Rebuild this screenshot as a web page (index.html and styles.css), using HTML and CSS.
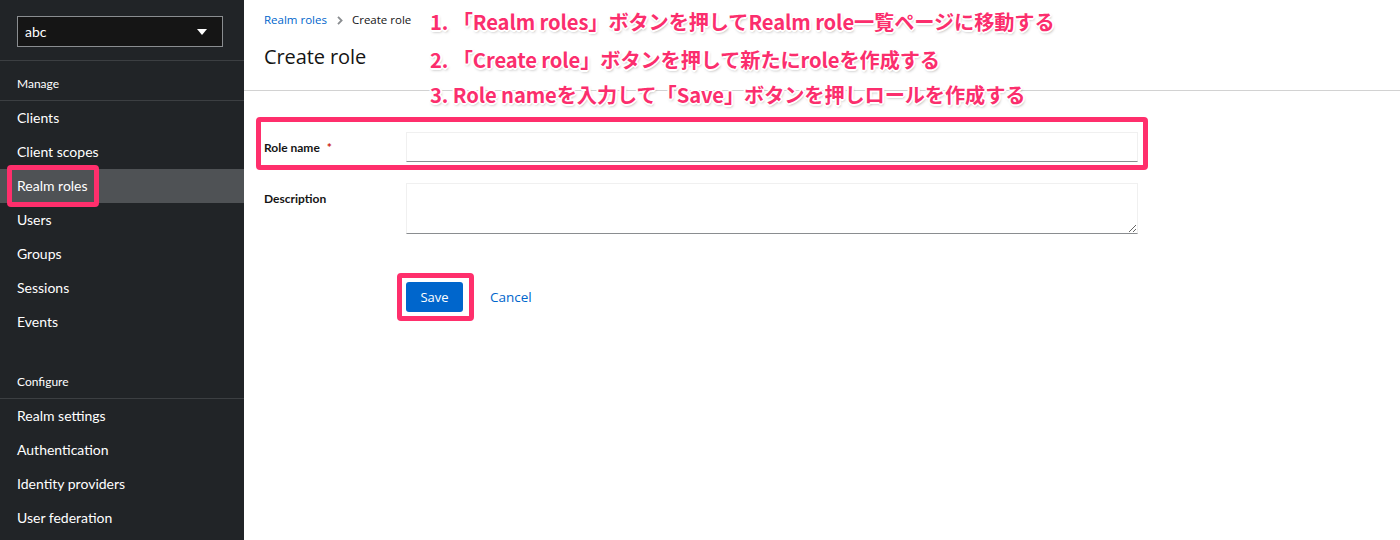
FILE: index.html
```html
<!DOCTYPE html>
<html lang="ja">
<head>
<meta charset="utf-8">
<title>Create role</title>
<link rel="stylesheet" href="styles.css">
</head>
<body>
<div class="app">
  <aside class="sidebar">
    <div class="realm-select-wrap">
      <div class="realm-select">
        <span>abc</span>
        <svg class="caret" width="10" height="6" viewBox="0 0 10 6"><path d="M0 0h10L5 6z" fill="#fff"/></svg>
      </div>
    </div>
    <div class="nav-group">
      <div class="nav-title">Manage</div>
      <ul class="nav-list">
        <li>Clients</li>
        <li>Client scopes</li>
        <li class="active">Realm roles</li>
        <li>Users</li>
        <li>Groups</li>
        <li>Sessions</li>
        <li>Events</li>
      </ul>
    </div>
    <div class="nav-group second">
      <div class="nav-title">Configure</div>
      <ul class="nav-list">
        <li>Realm settings</li>
        <li>Authentication</li>
        <li>Identity providers</li>
        <li>User federation</li>
      </ul>
    </div>
    <div class="mark mark-nav"></div>
  </aside>
  <main class="main">
    <section class="page-header">
      <nav class="breadcrumb">
        <a class="crumb-link">Realm roles</a>
        <svg class="crumb-sep" width="6" height="9" viewBox="0 0 6 9"><path d="M1 0.8L4.6 4.5L1 8.2" fill="none" stroke="#8a8d90" stroke-width="1.8"/></svg>
        <span class="crumb-current">Create role</span>
      </nav>
      <h1 class="title">Create role</h1>
    </section>
    <section class="form-section">
      <form class="form">
        <div class="form-row">
          <label class="form-label">Role name <span class="req">*</span></label>
          <div class="form-control"><input class="text-input" type="text"></div>
        </div>
        <div class="form-row">
          <label class="form-label top">Description</label>
          <div class="form-control"><textarea class="text-area"></textarea></div>
        </div>
        <div class="form-actions">
          <button type="button" class="btn-primary">Save</button>
          <button type="button" class="btn-link">Cancel</button>
        </div>
      </form>
    </section>
    <div class="mark mark-row"></div>
    <div class="mark mark-save"></div>
    <div class="notes">
      <p class="note n1">1. 「Realm roles」ボタンを押してRealm role一覧ページに移動する</p>
      <p class="note n2">2. 「Create role」ボタンを押して新たにroleを作成する</p>
      <p class="note n3">3. Role nameを入力して「Save」ボタンを押しロールを作成する</p>
    </div>
  </main>
</div>
</body>
</html>
```

FILE: styles.css
```css
* { box-sizing: border-box; }
html, body { margin: 0; padding: 0; }
body {
  width: 1400px;
  height: 540px;
  overflow: hidden;
  font-family: Lato, "Open Sans", "Noto Sans CJK JP", sans-serif;
  background: #fff;
  color: #151515;
}
.app {
  display: flex;
  height: 540px;
}
.sidebar {
  position: relative;
  width: 244px;
  flex: 0 0 244px;
  background: #212427;
  color: #fff;
}
.realm-select-wrap {
  padding: 16px 21px 13px 17px;
  border-bottom: 1px solid #3c3f42;
}
.realm-select {
  height: 31px;
  background: #151515;
  border: 1px solid #8a8d90;
  display: flex;
  align-items: center;
  justify-content: space-between;
  padding: 0 15px 0 7px;
  font-size: 14px;
}
.nav-title {
  font-size: 12px;
  line-height: 16px;
  padding: 15px 17px 8px;
  border-bottom: 1px solid #3c3f42;
}
.nav-group.second { margin-top: 20px; }
.nav-list {
  list-style: none;
  margin: 0;
  padding: 0;
}
.nav-list li {
  height: 34px;
  line-height: 33px;
  padding-left: 17px;
  font-size: 14px;
}
.nav-list li.active { background: #4f5255; }

.main {
  position: relative;
  flex: 1;
}
.page-header {
  padding: 12px 20px 0;
  height: 91px;
  border-bottom: 1px solid #d2d2d2;
}
.breadcrumb {
  display: flex;
  align-items: center;
  font-size: 11.5px;
  line-height: 16px;
  font-family: "Open Sans", Lato, sans-serif;
}
.crumb-link { color: #0066cc; }
.crumb-sep { margin: 0 9px 0 10px; }
.crumb-current { color: #151515; }
.title {
  margin: 15px 0 0;
  font-family: "Open Sans", Lato, sans-serif;
  font-weight: 400;
  font-size: 20px;
  line-height: 28px;
  letter-spacing: -0.1px;
}
.form-section { padding: 41px 20px 0; }
.form {
  display: flex;
  flex-direction: column;
  gap: 21px;
}
.form-row {
  display: grid;
  grid-template-columns: 142px 732px;
  align-items: center;
}
.form-row:nth-child(2) { align-items: start; }
.form-label {
  font-size: 12px;
  font-weight: 700;
  color: #151515;
}
.form-label.top { padding-top: 8px; }
.req { color: #c9190b; margin-left: 4px; }
.text-input, .text-area {
  display: block;
  width: 732px;
  margin: 0;
  border: 1px solid #f0f0f0;
  border-bottom-color: #8a8d90;
  background: #fff;
  font: inherit;
}
.text-input { height: 30px; }
.text-area { height: 51px; resize: vertical; }
.form-actions {
  display: flex;
  align-items: center;
  gap: 10px;
  margin-top: 27px;
  padding-left: 142px;
}
.btn-primary {
  background: #0066cc;
  color: #fff;
  border: 0;
  border-radius: 3px;
  height: 30px;
  width: 57px;
  font-family: "Open Sans", Lato, sans-serif;
  font-size: 13px;
}
.btn-link {
  background: none;
  border: 0;
  color: #0066cc;
  font-family: "Open Sans", Lato, sans-serif;
  font-size: 13.5px;
  padding: 0 17px;
}

.mark {
  position: absolute;
  border: 5px solid #ff2f6c;
  border-radius: 4px;
  pointer-events: none;
}
.mark-nav { left: 7px; top: 165px; width: 92px; height: 42px; }
.mark-row { left: 12px; top: 117px; width: 892px; height: 53px; }
.mark-save { left: 153px; top: 273px; width: 77px; height: 48px; }

.notes {
  position: absolute;
  left: 186px;
  top: 8px;
}
.note {
  margin: 0;
  font-family: "Noto Sans CJK JP", sans-serif;
  font-weight: 700;
  font-size: 20.2px;
  line-height: 28px;
  height: 38px;
  color: #fb2e6d;
  white-space: nowrap;
  letter-spacing: -0.1px;
  text-shadow:
    -1px -1px 0 #fff, 1px -1px 0 #fff, -1px 1px 0 #fff, 1px 1px 0 #fff,
    0 -2px 0 #fff, 0 2px 0 #fff, -2px 0 0 #fff, 2px 0 0 #fff,
    1px 2px 3px rgba(0,0,0,0.35);
}
.n3 { height: 30px; margin-top: -3px; }
```
